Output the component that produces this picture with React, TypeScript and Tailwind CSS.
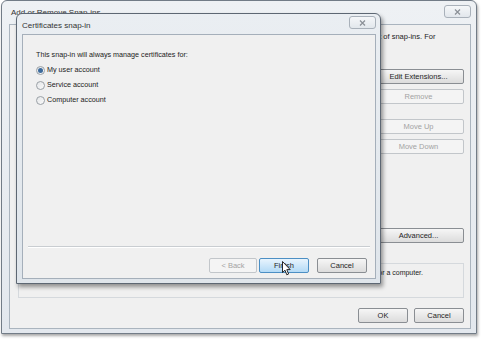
import { type ReactNode } from 'react';

const font = { fontFamily: '"Liberation Sans", Arial, sans-serif' };

function Btn({ children, w, disabled, hot }: { children: ReactNode; w: string; disabled?: boolean; hot?: boolean }) {
  const base = 'h-[15px] flex items-center justify-center rounded-[2px] border text-[7.5px] leading-none';
  const look = disabled
    ? 'border-[#c2c6ca] bg-[#f4f4f4] text-[#a3a3a3]'
    : hot
      ? 'border-[#4c8fc4] bg-gradient-to-b from-[#e8f4fd] to-[#b3daf6] text-[#1e1e1e]'
      : 'border-[#8a8e93] bg-gradient-to-b from-[#f6f6f6] to-[#dcdcdc] text-[#1e1e1e]';
  return <div className={`${base} ${look} ${w}`}>{children}</div>;
}

function CloseBox() {
  return (
    <div className="w-[27px] h-[13px] rounded-[3px] border border-[#a9b1ba] bg-gradient-to-b from-[#f5f7f9] to-[#e2e7ec] flex items-center justify-center">
      <svg width="7" height="6" viewBox="0 0 7 6">
        <path d="M1 0.5 L6 5.5 M6 0.5 L1 5.5" stroke="#8b9097" strokeWidth="1.2" />
      </svg>
    </div>
  );
}

function Radio({ checked, label }: { checked?: boolean; label: string }) {
  return (
    <div className="flex items-center h-[14px]">
      <div className="w-[9px] h-[9px] rounded-full border border-[#9aa0a6] bg-gradient-to-br from-[#e4e6e8] to-[#fafafa] flex items-center justify-center">
        {checked && <div className="w-[5px] h-[5px] rounded-full bg-[#3d6b9c]" />}
      </div>
      <span className="ml-[2px] text-[7.2px] text-[#222]">{label}</span>
    </div>
  );
}

export default function App() {
  return (
    <div className="relative w-[485px] h-[343px] bg-white overflow-hidden" style={font}>
      {/* Add or Remove Snap-ins window */}
      <div className="ml-[1px] w-[476px] h-[334px] rounded-t-[6px] border border-[#727c87] bg-gradient-to-b from-[#eef1f4] to-[#e3e8ee] flex flex-col shadow-[1px_2px_3px_rgba(0,0,0,0.35)]">
        <div className="h-[23px] flex items-start justify-between pl-[9px] pr-[5px]">
          <span className="mt-[6px] text-[8px] text-[#333]">Add or Remove Snap-ins</span>
          <div className="mt-[4px]">
            <CloseBox />
          </div>
        </div>
        <div className="ml-[7px] mr-[5px] mb-[4px] flex-1 border border-[#aab4be] bg-[#f0f0f0] flex flex-col pl-[8px] pr-[6px]">
          <div className="h-[20px] pt-[8px] pr-[29px] overflow-hidden whitespace-nowrap text-right text-[7.5px] text-[#222] leading-none">
            You can select snap-ins for this console from those available on your computer and configure the selected set of snap-ins. For
          </div>
          <div className="flex justify-end mt-[24px]">
            <div className="w-[91px] flex flex-col">
              <Btn w="w-full">Edit Extensions...</Btn>
              <div className="mt-[5px]">
                <Btn w="w-full" disabled>Remove</Btn>
              </div>
              <div className="mt-[15px]">
                <Btn w="w-full" disabled>Move Up</Btn>
              </div>
              <div className="mt-[5px]">
                <Btn w="w-full" disabled>Move Down</Btn>
              </div>
              <div className="mt-[74px]">
                <Btn w="w-full">Advanced...</Btn>
              </div>
            </div>
          </div>
          <div className="mt-[20px] h-[35px] border border-[#d5d9dd] flex justify-end">
            <div className="pr-[40px] pt-[4px] overflow-hidden whitespace-nowrap text-right text-[7px] text-[#222]">
              The Certificates snap-in allows you to browse the contents of the certificate stores for yourself, a service, or a computer.
            </div>
          </div>
          <div className="mt-[10px] flex justify-end gap-[6px]">
            <Btn w="w-[50px]">OK</Btn>
            <Btn w="w-[50px]">Cancel</Btn>
          </div>
        </div>
      </div>

      {/* Certificates snap-in dialog */}
      <div className="absolute left-[16px] top-[13px] w-[365px] h-[271px] rounded-t-[6px] border border-[#5d6773] bg-gradient-to-b from-[#eaeef2] to-[#dfe5eb] flex flex-col shadow-[2px_3px_4px_rgba(0,0,0,0.4)]">
        <div className="h-[20px] flex items-start justify-between pl-[5px] pr-[4px]">
          <span className="mt-[6px] text-[8px] text-[#333]">Certificates snap-in</span>
          <div className="mt-[2px]">
            <CloseBox />
          </div>
        </div>
        <div className="ml-[5px] mr-[4px] mb-[4px] flex-1 border border-[#a5afba] bg-[#f0f0f0] flex flex-col">
          <div className="pl-[13px] pt-[16px] text-[7.2px] text-[#222] leading-none">
            This snap-in will always manage certificates for:
          </div>
          <div className="pl-[13px] mt-[5px] flex flex-col gap-[1px]">
            <Radio checked label="My user account" />
            <Radio label="Service account" />
            <Radio label="Computer account" />
          </div>
          <div className="flex-1" />
          <div className="mx-[5px] h-px bg-[#c9cdd1] border-b border-white box-content" />
          <div className="mt-[10px] mb-[5px] pr-[8px] flex justify-end">
            <Btn w="w-[48px]" disabled>&lt; Back</Btn>
            <div className="ml-[2px]">
              <Btn w="w-[50px]" hot>Finish</Btn>
            </div>
            <div className="ml-[8px]">
              <Btn w="w-[50px]">Cancel</Btn>
            </div>
          </div>
        </div>
      </div>

      {/* mouse cursor */}
      <svg className="absolute left-[282px] top-[261px]" width="10" height="15" viewBox="0 0 10 15">
        <path d="M0.5 0.5 L0.5 11.5 L3 9.2 L4.8 13.8 L6.6 13 L4.8 8.6 L8.2 8.6 Z" fill="#fff" stroke="#111" strokeWidth="0.9" strokeLinejoin="round" />
      </svg>
    </div>
  );
}
